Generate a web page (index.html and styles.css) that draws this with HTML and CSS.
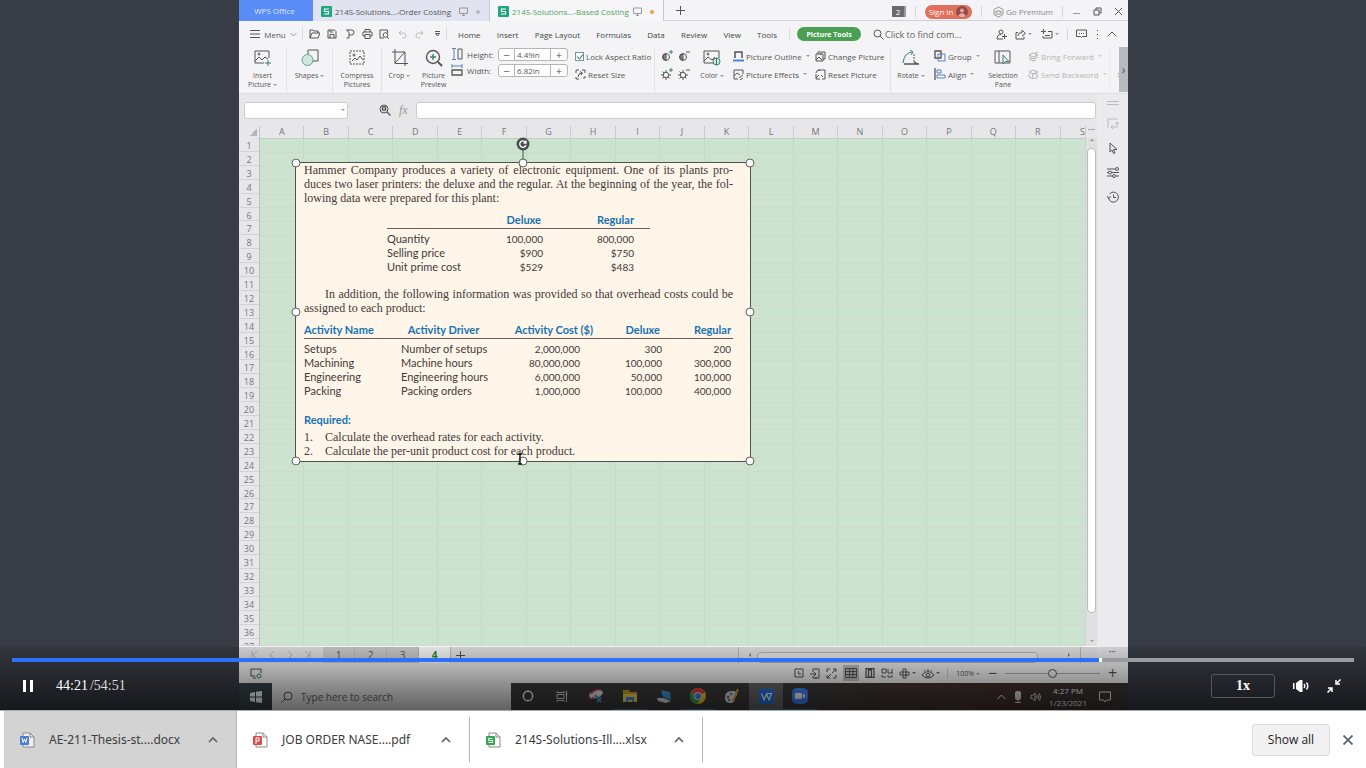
FILE: index.html
```html
<!DOCTYPE html>
<html lang="en">
<head>
    <meta charset="UTF-8">
    <meta name="viewport" content="width=device-width, initial-scale=1.0">
    <title>Lecture Recording</title>
    <link rel="stylesheet" href="styles.css">
</head>
<body>
    <main class="player">
        <div class="screen">

            <!-- Window tabs -->
            <header class="titlebar">
                <button class="home-tab">WPS Office</button>
                <button class="file-tab">
                    <svg class="sheet-logo" width="11" height="11" viewBox="0 0 11 11"><rect width="11" height="11" rx="1" fill="#1fa67a"/><path d="M8 3H3.500v2.500H7.500V8H3" fill="none" stroke="#fff" stroke-width="1.200"/></svg>
                    <span class="file-name">214S-Solutions...-Order Costing</span>
                    <svg class="ico pale" width="9" height="9" viewBox="0 0 9 9"><path d="M.5 1h8v5.500h-8zM4.500 6.500v2M3 8.500h3"/></svg>
                    <span class="dot"></span>
                </button>
                <button class="file-tab current">
                    <svg class="sheet-logo" width="11" height="11" viewBox="0 0 11 11"><rect width="11" height="11" rx="1" fill="#1fa67a"/><path d="M8 3H3.500v2.500H7.500V8H3" fill="none" stroke="#fff" stroke-width="1.200"/></svg>
                    <span class="file-name">214S-Solutions...-Based Costing</span>
                    <svg class="ico pale" width="9" height="9" viewBox="0 0 9 9"><path d="M.5 1h8v5.500h-8zM4.500 6.500v2M3 8.500h3"/></svg>
                    <span class="dot unsaved"></span>
                </button>
                <button class="new-tab" aria-label="New tab"><svg class="ico" width="9" height="9" viewBox="0 0 9 9"><path d="M4.500 0v9M0 4.500h9"/></svg></button>
                <div class="window-tools">
                    <span class="count">2</span>
                    <i class="sep"></i>
                    <button class="sign-in">Sign in <svg width="12" height="12" viewBox="0 0 12 12"><circle cx="6" cy="6" r="6" fill="#8f4a4a"/><circle cx="6" cy="4.500" r="2" fill="#e7a79d"/><path d="M2 10q4-6 8 0-4 3-8 0z" fill="#e7a79d"/></svg></button>
                    <i class="sep"></i>
                    <button class="premium"><svg class="ico pale" width="11" height="12" viewBox="0 0 11 12"><path d="M5.500 1L10 3.500v5L5.500 11 1 8.500v-5zM3 5l1.200 1L5.500 4l1.300 2L8 5v3H3z"/></svg>Go Premium</button>
                    <i class="sep"></i>
                    <button aria-label="Minimize"><svg class="ico pale" width="9" height="9" viewBox="0 0 9 9"><path d="M1 6.500h7"/></svg></button>
                    <button aria-label="Restore"><svg class="ico" width="9" height="9" viewBox="0 0 9 9"><path d="M1 3h5v5H1zM3 3V1h5v5H6"/></svg></button>
                    <button aria-label="Close"><svg class="ico" width="9" height="9" viewBox="0 0 9 9"><path d="M1 1l7 7M8 1L1 8"/></svg></button>
                </div>
            </header>

            <!-- Menu row -->
            <nav class="menubar">
                <button class="menu-button">
                    <svg class="ico" width="10" height="8" viewBox="0 0 10 8"><path d="M0 .5h10M0 4h10M0 7.500h10"/></svg>
                    Menu
                    <svg class="ico pale" width="7" height="5" viewBox="0 0 7 5"><path d="M.5 1l3 3 3-3"/></svg>
                </button>
                <div class="quick">
                    <button aria-label="Open"><svg class="ico" width="11" height="10" viewBox="0 0 11 10"><path d="M1 9V1h3l1 1h4v2M1 9l2-5h8L9 9z"/></svg></button>
                    <button aria-label="Save"><svg class="ico" width="10" height="10" viewBox="0 0 10 10"><path d="M1 1h6.500L9 2.500V9H1zM3 9V5.500h4V9M3 1v2h3"/></svg></button>
                    <button aria-label="Export as PDF"><svg class="ico" width="10" height="10" viewBox="0 0 10 10"><path d="M1 1h5.500a2.300 2.300 0 010 5H4v-3M4 6v3H1.500M3 1v2"/></svg></button>
                    <button aria-label="Print"><svg class="ico" width="11" height="10" viewBox="0 0 11 10"><path d="M3 3V.5h5V3M3 7H1V3h9v4H8M3 5.500h5v4H3z"/></svg></button>
                    <button aria-label="Print preview"><svg class="ico" width="11" height="10" viewBox="0 0 11 10"><path d="M5 9H1V1h7.500v3M8 8l2 2"/><circle cx="6.500" cy="6" r="2.300"/></svg></button>
                    <button aria-label="Undo"><svg class="ico faint" width="9" height="9" viewBox="0 0 9 9"><path d="M3 1L1 3l2 2M1 3h4.500a2.500 2.500 0 010 5H4"/></svg></button>
                    <button aria-label="Redo"><svg class="ico faint" width="9" height="9" viewBox="0 0 9 9"><path d="M6 1l2 2-2 2M8 3H3.500a2.500 2.500 0 000 5H5"/></svg></button>
                    <button aria-label="Customize"><svg class="ico" width="7" height="6" viewBox="0 0 7 6"><path d="M1 .5h5M1.500 2.500h4L3.500 5z"/></svg></button>
                </div>
                <div class="menus">
                    <button>Home</button>
                    <button>Insert</button>
                    <button>Page Layout</button>
                    <button>Formulas</button>
                    <button>Data</button>
                    <button>Review</button>
                    <button>View</button>
                    <button>Tools</button>
                </div>
                <div class="context"><button class="picture-tools">Picture Tools</button></div>
                <div class="find">
                    <svg class="ico" width="11" height="11" viewBox="0 0 11 11"><circle cx="4.500" cy="4.500" r="3.500"/><path d="M7 7l3.500 3.500"/></svg>
                    <input type="text" aria-label="Find command" placeholder="Click to find com...">
                </div>
                <div class="share">
                    <button aria-label="Collaborate"><svg class="ico" width="11" height="11" viewBox="0 0 11 11"><circle cx="5" cy="3" r="2"/><path d="M1 10q0-4.500 4-4.500M1 10h6M8.500 5v5M6 7.500h5"/></svg></button>
                    <button aria-label="Share"><svg class="ico" width="11" height="11" viewBox="0 0 11 11"><path d="M3 3.500H1V10h8V7.500M3 7q0-3.500 4-3.500V1l3.500 3.500L7 7"/></svg><b class="caret"></b></button>
                    <button aria-label="Note"><svg class="ico" width="12" height="11" viewBox="0 0 12 11"><path d="M0 2.500h5M2.500 0v5M7 2.500h4V9H2V7M4 6.500h5"/></svg><b class="caret"></b></button>
                    <i class="sep"></i>
                    <button aria-label="Feedback"><svg class="ico" width="11" height="10" viewBox="0 0 11 10"><path d="M.5 1h10v6.500H6.500l-1 1-1-1h-4zM3 4.500h1M5 4.500h1M7 4.500h1"/></svg></button>
                    <button aria-label="More"><svg class="ico" width="3" height="9" viewBox="0 0 3 9"><path d="M1 .5h1M1 4.500h1M1 8.500h1"/></svg></button>
                    <button aria-label="Collapse ribbon"><svg class="ico" width="10" height="6" viewBox="0 0 10 6"><path d="M.5 5.500L5 1l4.500 4.500"/></svg></button>
                </div>
            </nav>

            <!-- Ribbon -->
            <section class="ribbon">
                <button class="tool ruled">
                    <svg class="ico" width="18" height="18" viewBox="0 0 18 18"><path d="M10 14H1V2h14v7M1 12l4-4 3 3 3-3 3 2"/><circle cx="5" cy="5" r="1"/><path d="M14 11v6M11 14h6" stroke="#3d7d6a"/></svg>
                    <span>Insert<br>Picture<b class="caret"></b></span>
                </button>
                <button class="tool ruled">
                    <svg class="ico" width="18" height="18" viewBox="0 0 18 18"><path d="M7 1h10v11H7z"/><circle cx="6.500" cy="11" r="5.500" fill="#cfe8de" stroke="#6f9d8d"/></svg>
                    <span>Shapes<b class="caret"></b></span>
                </button>
                <button class="tool ruled">
                    <svg class="ico" width="18" height="18" viewBox="0 0 18 18"><path d="M2 2h14v13H2z" stroke-dasharray="2 1"/><path d="M4 12l3-3 2 2 3-4 3 4"/><circle cx="6" cy="6" r="1"/></svg>
                    <span>Compress<br>Pictures</span>
                </button>
                <button class="tool">
                    <svg class="ico" width="18" height="18" viewBox="0 0 18 18"><path d="M4 0v14.500h13M1 3h13v14M4 14L14 3" /></svg>
                    <span>Crop<b class="caret"></b></span>
                </button>
                <button class="tool">
                    <svg class="ico" width="18" height="18" viewBox="0 0 18 18"><circle cx="8" cy="8" r="6.500" stroke-width="1.400"/><path d="M13 13l4 4" stroke-width="2"/><path d="M8 5v6M5 8h6" stroke="#3d7d6a" stroke-width="1.400"/></svg>
                    <span>Picture<br>Preview</span>
                </button>
                <div class="rows size">
                    <div class="size-row">
                        <svg class="ico" width="12" height="12" viewBox="0 0 12 12"><path d="M7 1h4v10H7z"/><path d="M1 .5h4M1 11.500h4M3 1v10" stroke="#5b7fc4"/></svg>
                        <label for="pic-height">Height:</label>
                        <div class="stepper"><button aria-label="Less height">−</button><input id="pic-height" type="text" value="4.49in"><button aria-label="More height">+</button></div>
                    </div>
                    <div class="size-row">
                        <svg class="ico" width="12" height="12" viewBox="0 0 12 12"><path d="M1 6h10v5H1z" stroke-width="1.300"/><path d="M1 0v4M11 0v4M1 2h10" stroke="#5b7fc4"/></svg>
                        <label for="pic-width">Width:</label>
                        <div class="stepper"><button aria-label="Less width">−</button><input id="pic-width" type="text" value="6.82in"><button aria-label="More width">+</button></div>
                    </div>
                </div>
                <div class="rows ruled">
                    <label class="small"><input class="tick" type="checkbox" checked>Lock Aspect Ratio</label>
                    <button class="small"><svg class="ico" width="11" height="11" viewBox="0 0 11 11"><path d="M1 4V1h3M7 1h3v3M1 8v2h3M3 8q0-4 4-4M5 2.500L7.500 4 6 6M8 9h2V7"/></svg>Reset Size</button>
                </div>
                <div class="light">
                    <button aria-label="More contrast"><svg class="ico" width="12" height="12" viewBox="0 0 12 12"><circle cx="5" cy="7" r="3.500"/><path d="M5 4v6a3 3 0 010-6" fill="#888"/><path d="M10 0v4M8 2h4" stroke="#3d7d6a"/></svg></button>
                    <button aria-label="Less contrast"><svg class="ico" width="12" height="12" viewBox="0 0 12 12"><circle cx="5" cy="7" r="3.500"/><path d="M5 4v6a3 3 0 010-6" fill="#888"/><path d="M8 2h4"/></svg></button>
                    <button aria-label="More brightness"><svg class="ico" width="12" height="12" viewBox="0 0 12 12"><circle cx="5" cy="7" r="2.700"/><path d="M5 2v2M5 10v2M0 7h2M8 7h2M1.500 3.500L3 5M1.500 10.500L3 9M8.500 10.500L7 9"/><path d="M10 0v4M8 2h4" stroke="#3d7d6a"/></svg></button>
                    <button aria-label="Less brightness"><svg class="ico" width="12" height="12" viewBox="0 0 12 12"><circle cx="5" cy="7" r="2.700"/><path d="M5 2v2M5 10v2M0 7h2M8 7h2M1.500 3.500L3 5M1.500 10.500L3 9M8.500 10.500L7 9M8 2h4"/></svg></button>
                </div>
                <button class="tool">
                    <svg class="ico" width="18" height="18" viewBox="0 0 18 18"><path d="M10 14H1V2h15v7M1 12l4-4 4 3 3-3"/><circle cx="5" cy="5" r="1"/><circle cx="13.500" cy="12.500" r="3.500" fill="#d5e8df" stroke="#3d7d6a"/><path d="M13.500 9v7" stroke="#3d7d6a"/></svg>
                    <span>Color<b class="caret"></b></span>
                </button>
                <div class="rows">
                    <button class="small"><svg class="ico" width="11" height="11" viewBox="0 0 11 11"><path d="M2 7V1h7v6" stroke-width="1.500"/><path d="M0 9.500h11" stroke="#4a86d8" stroke-width="2"/></svg>Picture Outline<b class="caret"></b></button>
                    <button class="small"><svg class="ico" width="11" height="11" viewBox="0 0 11 11"><path d="M10 5V1H1v9h4M1 7l3-3 3 2M6 9l4-3M7 11l3-2"/></svg>Picture Effects<b class="caret"></b></button>
                </div>
                <div class="rows ruled">
                    <button class="small"><svg class="ico" width="11" height="11" viewBox="0 0 11 11"><path d="M3 3V1h7v7H8M1 3h7v7H1zM1 9l3-3 3 3M5 4l2-2"/></svg>Change Picture</button>
                    <button class="small"><svg class="ico" width="11" height="11" viewBox="0 0 11 11"><path d="M3 1h7v9H7M1 5v5h4M1 9l3-3M1 4q0-3 4-3M6 6l2 2"/></svg>Reset Picture</button>
                </div>
                <button class="tool">
                    <svg class="ico" width="18" height="18" viewBox="0 0 18 18"><path d="M1 14q1-10 9-11M8 1l3 2-2 3" stroke="#3d7d6a"/><path d="M12 5v8" stroke-dasharray="2 1"/><path d="M2 15h15M12 13l4 2" stroke-width="1.300"/></svg>
                    <span>Rotate<b class="caret"></b></span>
                </button>
                <div class="rows">
                    <button class="small"><svg class="ico" width="12" height="12" viewBox="0 0 12 12"><path d="M1 1h6v7H1z" stroke-width="1.300"/><path d="M4 4h7v7H4z" stroke="#5b7fc4"/></svg>Group<b class="caret"></b></button>
                    <button class="small"><svg class="ico" width="12" height="12" viewBox="0 0 12 12"><path d="M1 0v12" stroke-width="1.300"/><path d="M3 2h4v3H3zM3 7h8v3H3z" stroke="#5b7fc4"/></svg>Align<b class="caret"></b></button>
                </div>
                <button class="tool">
                    <svg class="ico" width="18" height="18" viewBox="0 0 18 18"><path d="M1 2h15v12H1zM5 2v12"/><path d="M9 6v9l2.500-2.500H15z" fill="#e6f2ec" stroke="#3d7d6a"/></svg>
                    <span>Selection<br>Pane</span>
                </button>
                <div class="rows ruled off">
                    <button class="small"><svg class="ico" width="11" height="11" viewBox="0 0 11 11"><path d="M1 4l4-2 5 2-5 2zM1 6l4 2 5-2M1 8l4 2 3-1M7 2l3-1"/></svg>Bring Forward<b class="caret"></b></button>
                    <button class="small"><svg class="ico" width="11" height="11" viewBox="0 0 11 11"><path d="M1 3l4-2 5 2-5 2zM1 5v3l4 2"/><circle cx="7" cy="7" r="2.500"/></svg>Send Backword<b class="caret"></b></button>
                </div>
                <span class="cut">:</span>
                <button class="ribbon-next" aria-label="Scroll ribbon">›</button>
            </section>

            <!-- Workbook -->
            <div class="work">
                <div class="book">
                    <div class="formula-bar">
                        <div class="name-box"><input type="text" aria-label="Name box"><b class="caret"></b></div>
                        <svg class="ico" width="12" height="12" viewBox="0 0 12 12"><circle cx="5" cy="5" r="4"/><path d="M3.500 3h3v3h-3zM8 8l3.500 3.500" stroke-width="1.300"/></svg>
                        <span class="fx">fx</span>
                        <input class="formula" type="text" aria-label="Formula">
                    </div>
                    <div class="sheet">
                        <div class="corner"></div>
                        <div class="col-heads" id="colHeads"></div>
                        <div class="split"></div>
                        <div class="row-heads" id="rowHeads"></div>
                        <div class="cells">
                            <div class="col-lines" id="colLines"></div>
                            <div class="row-lines" id="rowLines"></div>

                            <article class="picture">
                                <p class="problem"><span class="full">Hammer Company produces a variety of electronic equipment. One of its plants pro-</span> <span class="full">duces two laser printers: the deluxe and the regular. At the beginning of the year, the fol-</span> <span>lowing data were prepared for this plant:</span></p>
                                <table class="prices">
                                    <thead>
                                        <tr><th></th><th>Deluxe</th><th>Regular</th><th></th></tr>
                                    </thead>
                                    <tbody>
                                        <tr><td>Quantity</td><td class="num">100,000</td><td class="num">800,000</td><td></td></tr>
                                        <tr><td>Selling price</td><td class="num">$900</td><td class="num">$750</td><td></td></tr>
                                        <tr><td>Unit prime cost</td><td class="num">$529</td><td class="num">$483</td><td></td></tr>
                                    </tbody>
                                </table>
                                <p class="problem"><span class="full indent">In addition, the following information was provided so that overhead costs could be</span> <span>assigned to each product:</span></p>
                                <table class="activities">
                                    <thead>
                                        <tr><th>Activity Name</th><th>Activity Driver</th><th>Activity Cost ($)</th><th>Deluxe</th><th>Regular</th></tr>
                                    </thead>
                                    <tbody>
                                        <tr><td>Setups</td><td>Number of setups</td><td class="num">2,000,000</td><td class="num">300</td><td class="num">200</td></tr>
                                        <tr><td>Machining</td><td>Machine hours</td><td class="num">80,000,000</td><td class="num">100,000</td><td class="num">300,000</td></tr>
                                        <tr><td>Engineering</td><td>Engineering hours</td><td class="num">6,000,000</td><td class="num">50,000</td><td class="num">100,000</td></tr>
                                        <tr><td>Packing</td><td>Packing orders</td><td class="num">1,000,000</td><td class="num">100,000</td><td class="num">400,000</td></tr>
                                    </tbody>
                                </table>
                                <h2>Required:</h2>
                                <ol>
                                    <li>Calculate the overhead rates for each activity.</li>
                                    <li>Calculate the per-unit product cost for each product.</li>
                                </ol>

                                <svg class="rotate" width="14" height="22" viewBox="0 0 14 22"><path d="M7 12v10" stroke="#4a5550"/><circle cx="7" cy="7" r="6.500" fill="#46504c"/><path d="M9.500 5.200A3.200 3.200 0 1010 8M10 3.500V6H7.500" fill="none" stroke="#fff" stroke-width="1.300"/></svg>
                                <i class="handle top left"></i>
                                <i class="handle top center"></i>
                                <i class="handle top right"></i>
                                <i class="handle middle left"></i>
                                <i class="handle middle right"></i>
                                <i class="handle bottom left"></i>
                                <i class="handle bottom center"></i>
                                <i class="handle bottom right"></i>
                                <svg class="ibeam" width="6" height="12" viewBox="0 0 6 12"><path d="M1 1h4M3 1v10M1 11h4" stroke="#111" fill="none" stroke-width="1.400"/></svg>
                            </article>
                        </div>
                        <div class="vscroll"><b class="up"></b><span class="thumb"></span><b class="caret"></b></div>
                    </div>
                    <div class="sheet-tabs">
                        <div class="sheet-nav">
                            <button aria-label="First sheet"><svg class="ico" width="7" height="8" viewBox="0 0 7 8"><path d="M1 0v8M6 0L2 4l4 4"/></svg></button>
                            <button aria-label="Previous sheet"><svg class="ico" width="7" height="8" viewBox="0 0 7 8"><path d="M5 0L1 4l4 4"/></svg></button>
                            <button aria-label="Next sheet"><svg class="ico" width="7" height="8" viewBox="0 0 7 8"><path d="M2 0l4 4-4 4"/></svg></button>
                            <button aria-label="Last sheet"><svg class="ico" width="7" height="8" viewBox="0 0 7 8"><path d="M6 0v8M1 0l4 4-4 4"/></svg></button>
                        </div>
                        <button class="sheet-tab">1</button>
                        <button class="sheet-tab">2</button>
                        <button class="sheet-tab">3</button>
                        <button class="sheet-tab current">4</button>
                        <button class="add-sheet" aria-label="Add sheet"><svg class="ico" width="9" height="9" viewBox="0 0 9 9"><path d="M4.500 0v9M0 4.500h9"/></svg></button>
                        <div class="hscroll"><b class="back"></b><span class="thumb"></span><b class="forward"></b></div>
                    </div>
                </div>
                <aside class="side">
                    <svg class="ico faint" width="12" height="4" viewBox="0 0 12 4"><path d="M0 .5h12M0 3.500h12"/></svg>
                    <button aria-label="Panel"><svg class="ico faint" width="12" height="11" viewBox="0 0 12 11"><path d="M1 1v9M1 1h10M5 9h5V4M8 6l2-2 2 2M6 7L4 9l2 2"/></svg></button>
                    <button aria-label="Select"><svg class="ico" width="12" height="12" viewBox="0 0 12 12"><path d="M3 1v9l2-2 1.500 3.500 1.500-.5L6.500 7.500H10z"/></svg></button>
                    <button aria-label="Properties"><svg class="ico" width="12" height="11" viewBox="0 0 12 11"><path d="M0 2h8M0 5.500h2M4 5.500h8M0 9h6M8 9h4"/><circle cx="10" cy="2" r="1.500"/><circle cx="3" cy="5.500" r="1.500"/><circle cx="7" cy="9" r="1.500"/></svg></button>
                    <button aria-label="History"><svg class="ico" width="12" height="12" viewBox="0 0 12 12"><path d="M1.500 7a5 5 0 101-4M0 5l1.500 2L4 5.500M6.500 3.500v3H9"/></svg></button>
                    <button class="side-more" aria-label="More panels">•••</button>
                </aside>
            </div>

            <footer class="statusbar">
                <svg class="ico" width="12" height="11" viewBox="0 0 12 11"><path d="M5 8H1V1h10v4M3 10h3"/><circle cx="9" cy="8" r="2" stroke="#3d7d6a"/></svg>
                <div class="views">
                    <button aria-label="Macro"><svg class="ico" width="10" height="10" viewBox="0 0 10 10"><path d="M1 1h8v8H1zM4.500 3v3H7"/></svg></button>
                    <button aria-label="Export"><svg class="ico" width="10" height="11" viewBox="0 0 10 11"><path d="M3 4V1h6v9H3V8M0 6h5M4 4l2 2-2 2M5 10h2"/></svg></button>
                    <button aria-label="Full screen"><svg class="ico" width="11" height="11" viewBox="0 0 11 11"><path d="M1 4V1h3M7 1h3v3M1 7v3h3M7 10h3V7M6 5l4-4M1 10l4-4"/></svg></button>
                    <button class="current" aria-label="Normal view"><svg class="ico" width="12" height="10" viewBox="0 0 12 10"><path d="M.5.5h11v9H.5zM.5 3.500h11M.5 6.500h11M4.500 0v10M8 0v10"/></svg></button>
                    <button aria-label="Page layout"><svg class="ico" width="10" height="10" viewBox="0 0 10 10"><path d="M1 .5h8v9H1zM3.500 2h3v7h-3z" stroke-width="1.300"/></svg></button>
                    <button aria-label="Page break preview"><svg class="ico" width="12" height="10" viewBox="0 0 12 10"><path d="M1 1v4h4V1zM7 1v4h5M11 1v4M1 7v2h4M7 7v2h4V7"/></svg></button>
                    <button aria-label="Reading mode"><svg class="ico" width="11" height="11" viewBox="0 0 11 11"><path d="M4 1h3v9H4zM1 4h9v3H1z"/></svg><b class="caret"></b></button>
                    <button aria-label="Eye protection"><svg class="ico" width="12" height="11" viewBox="0 0 12 11"><path d="M0 7q6-7 12 0-6 6-12 0M6 1v2M2 2l1 1.500M10 2L9 3.500"/><circle cx="6" cy="7" r="1.800"/></svg><b class="caret"></b></button>
                </div>
                <div class="zoom">
                    <label for="zoom">100%<b class="caret"></b></label>
                    <button aria-label="Zoom out">−</button>
                    <input id="zoom" type="range" min="0" max="200" value="100">
                    <button aria-label="Zoom in">+</button>
                </div>
            </footer>

            <!-- Windows taskbar -->
            <div class="taskbar">
                <button class="start" aria-label="Start"><svg width="12" height="12" viewBox="0 0 12 12" fill="#fff"><path d="M0 2l5-1v4.500H0zM6 .8L12 0v5.500H6zM0 6.500h5V11l-5-1zM6 6.500h6V12l-6-.8z"/></svg></button>
                <div class="win-search">
                    <svg class="ico" width="12" height="12" viewBox="0 0 12 12"><circle cx="7" cy="5" r="4"/><path d="M4 8L.5 11.500"/></svg>
                    <input type="text" aria-label="Windows search" placeholder="Type here to search">
                </div>
                <div class="apps">
                    <button aria-label="Cortana"><svg width="12" height="12" viewBox="0 0 12 12"><circle cx="6" cy="6" r="4.700" fill="none" stroke="#fff" stroke-width="1.500"/></svg></button>
                    <button aria-label="Task view"><svg width="12" height="12" viewBox="0 0 12 12" fill="none" stroke="#ddd"><path d="M1 1v1.500h7V1M1 4.500h7v4H1zM1 12v-1.500h7V12M10.500 1v11M9.500 4h2"/></svg></button>
                    <button aria-label="Snipping tool"><svg width="16" height="15" viewBox="0 0 16 15"><ellipse cx="8" cy="5" rx="7" ry="4" fill="#e8e4e6" transform="rotate(-20 8 5)"/><path d="M1 9q2 2 5-1M3 5q4-5 10-4" stroke="#d0424c" stroke-width="1.500" fill="none"/><path d="M7 6l6 7M13 8l-4 5" stroke="#4d94d8" stroke-width="2"/></svg></button>
                    <button class="open" aria-label="File Explorer"><svg width="16" height="14" viewBox="0 0 16 14"><path d="M1 1h6l1 2h7v10H1z" fill="#d9a520"/><path d="M1 5h14v8H1z" fill="#ffd65c"/><path d="M4 8h8v5h-2v-2H6v2H4z" fill="#3b98e0"/></svg></button>
                    <button aria-label="Remote desktop"><svg width="16" height="15" viewBox="0 0 16 15"><path d="M5 1l9 2 1 8-8-3z" fill="#3d9be0"/><path d="M1 9l6 0 8 3-5 2-8-2z" fill="#d8e4ec"/></svg></button>
                    <button class="open" aria-label="Chrome"><svg width="16" height="16" viewBox="0 0 16 16"><circle cx="8" cy="8" r="8" fill="#f7c52d"/><path d="M8 8L1 4a8 8 0 0114 0z" fill="#e84435"/><path d="M8 8L1 4a8 8 0 006 12l4-6z" fill="#34a853"/><circle cx="8" cy="8" r="3.800" fill="#fff"/><circle cx="8" cy="8" r="3" fill="#4285f4"/></svg></button>
                    <button aria-label="Paint"><svg width="16" height="16" viewBox="0 0 16 16"><path d="M1 10q0-7 7-7 6 0 5 4-1 2-3 2 2 6-4 6-5 0-5-5z" fill="#dfe6ea"/><circle cx="4" cy="9" r="1.400" fill="#e84435"/><circle cx="7" cy="6" r="1.400" fill="#4285f4"/><circle cx="5" cy="12" r="1.300" fill="#34a853"/><path d="M9 13l5-12" stroke="#e79a3a" stroke-width="2"/></svg></button>
                    <button class="open front" aria-label="WPS Writer"><svg width="15" height="15" viewBox="0 0 15 15"><rect width="15" height="15" rx="1" fill="#2277e8"/><path d="M2.500 4.500L5 11l2.500-6L10 11l2.500-6.500H8" fill="none" stroke="#fff" stroke-width="1.200"/></svg></button>
                    <button class="open" aria-label="Zoom"><svg width="16" height="16" viewBox="0 0 16 16"><rect width="16" height="16" rx="5" fill="#3f87ff"/><rect x="3" y="5" width="7" height="6" rx="1" fill="#fff"/><path d="M10.500 7.500L13 5.500v5l-2.500-2z" fill="#fff"/></svg></button>
                </div>
                <div class="tray">
                    <svg width="9" height="6" viewBox="0 0 9 6" fill="none" stroke="#fff"><path d="M.5 5l4-4 4 4"/></svg>
                    <svg width="8" height="13" viewBox="0 0 8 13" fill="#ddd"><rect x="1" width="6" height="9" rx="2"/><path d="M3.500 9h1v2H7v1H1v-1h2.500z"/></svg>
                    <svg width="11" height="10" viewBox="0 0 11 10" fill="none" stroke="#ddd"><path d="M1 3.500h1.500L5 1v8L2.500 6.500H1zM6.500 3.500q1 1.500 0 3M8 2.500q1.500 2.500 0 5M9.500 1.500q2 3.500 0 7"/></svg>
                    <div class="clock">4:27 PM<br>1/23/2021</div>
                    <svg width="12" height="12" viewBox="0 0 12 12" fill="none" stroke="#eee"><path d="M.5 1h11v8h-4L6 11 4.500 9h-4z"/></svg>
                </div>
            </div>
        </div>

        <!-- Playback controls -->
        <div class="controls">
            <input class="seek" type="range" aria-label="Seek" min="0" max="3291" value="2661">
            <div class="control-row">
                <button class="pause" aria-label="Pause"><svg width="10" height="12" viewBox="0 0 10 12" fill="#fff"><path d="M0 0h3v12H0zM7 0h3v12H7z"/></svg></button>
                <div class="time"><span>44:21</span>/54:51</div>
                <button class="speed">1x</button>
                <button aria-label="Volume"><svg width="16" height="14" viewBox="0 0 16 14"><path d="M0 4h1.500v6H0zM3 4l4-3h2.500v12H7L3 10z" fill="#fff"/><path d="M11 5q1.500 2 0 4M13.500 3.500q2.500 3.500 0 7" fill="none" stroke="#fff" stroke-width="1.400"/></svg></button>
                <button aria-label="Exit full screen"><svg width="14" height="14" viewBox="0 0 14 14" fill="none" stroke="#fff" stroke-width="1.500"><path d="M13.500.5L9.500 4.500M9 1v4h4M.5 13.500l4-4M1 9h4v4"/></svg></button>
            </div>
        </div>
    </main>

    <!-- Browser downloads -->
    <footer class="downloads">
        <div class="download active">
            <svg width="15" height="16" viewBox="0 0 15 16"><path d="M3 1h7l4 4v10H3z" fill="#eee" stroke="#8a8a8a"/><path d="M10 1v4h4" fill="none" stroke="#8a8a8a"/><rect y="4" width="9" height="9" rx="1" fill="#4a7bd0"/><path d="M2 6l1.200 4.500L4.500 7l1.300 3.500L7 6" fill="none" stroke="#fff"/></svg>
            <a href="#">AE-211-Thesis-st....docx</a>
            <button aria-label="Download options"><svg width="10" height="6" viewBox="0 0 10 6" fill="none" stroke="#5f6368" stroke-width="1.700"><path d="M1 5l4-4 4 4"/></svg></button>
        </div>
        <div class="download">
            <svg width="15" height="16" viewBox="0 0 15 16"><path d="M3 1h7l4 4v10H3z" fill="#fff" stroke="#8a8a8a"/><path d="M10 1v4h4" fill="none" stroke="#8a8a8a"/><rect y="4" width="9" height="9" rx="1" fill="#e04a4a"/><path d="M3 12V6h3v3H3" fill="none" stroke="#fff"/></svg>
            <a href="#">JOB ORDER NASE....pdf</a>
            <button aria-label="Download options"><svg width="10" height="6" viewBox="0 0 10 6" fill="none" stroke="#5f6368" stroke-width="1.700"><path d="M1 5l4-4 4 4"/></svg></button>
        </div>
        <div class="download">
            <svg width="15" height="16" viewBox="0 0 15 16"><path d="M3 1h7l4 4v10H3z" fill="#fff" stroke="#8a8a8a"/><path d="M10 1v4h4" fill="none" stroke="#8a8a8a"/><rect y="4" width="9" height="9" rx="1" fill="#2fa84f"/><path d="M6.500 6.500h-4v2h4v2h-4" fill="none" stroke="#fff"/></svg>
            <a href="#">214S-Solutions-Ill....xlsx</a>
            <button aria-label="Download options"><svg width="10" height="6" viewBox="0 0 10 6" fill="none" stroke="#5f6368" stroke-width="1.700"><path d="M1 5l4-4 4 4"/></svg></button>
        </div>
        <button class="show-all">Show all</button>
        <button class="dismiss" aria-label="Close"><svg width="10" height="10" viewBox="0 0 10 10" stroke="#5f6368" stroke-width="1.800"><path d="M.5.5l9 9M9.500.5l-9 9"/></svg></button>
    </footer>

    <script src="script.js"></script>
</body>
</html>
```

FILE: styles.css
```css
* {
    box-sizing: border-box;
}
body {
    margin: 0;
    height: 100vh;
    display: flex;
    flex-direction: column;
    font-family: "Open Sans", "Noto Sans", sans-serif;
    color: #555;
}
button, input {
    font: inherit;
    color: inherit;
    border: 0;
    padding: 0;
    margin: 0;
    background: none;
    min-width: 0;
}
button {
    display: flex;
    align-items: center;
    justify-content: center;
    white-space: nowrap;
}
svg {
    flex: none;
    display: block;
}
.ico {
    fill: none;
    stroke: #555;
}
.ico.pale {
    stroke: #999;
}
.ico.faint {
    stroke: #bbb;
}
.sep {
    width: 1px;
    height: 11px;
    background: #d6d6da;
}
.caret {
    display: inline-block;
    flex: none;
    border: 2px solid transparent;
    border-top-color: #999;
    border-bottom: 0;
    margin-left: 2px;
    vertical-align: middle;
}

/* player */
.player {
    flex: 1;
    min-height: 0;
    position: relative;
    display: grid;
    grid-template-columns: 239fr 889fr 238fr;
    grid-template-rows: minmax(0, 1fr);
    background: #383c45;
}
.screen {
    grid-column: 2;
    display: flex;
    flex-direction: column;
    min-width: 0;
    background: #f4f4f6;
    font-size: 8px;
    line-height: 9px;
}

/* title bar */
.titlebar {
    display: grid;
    grid-template-columns: minmax(0, 74fr) minmax(0, 177fr) minmax(0, 174fr) minmax(0, 32fr) minmax(0, 432fr);
    height: 21px;
    background: #f3f3f8;
    border-bottom: 1px solid #cfd0dc;
}
.home-tab {
    padding-right: 3px;
    background: #5a8cf8;
    color: #dbe6ff;
}
.file-tab {
    justify-content: flex-start;
    gap: 3px;
    padding: 2px 9px 0 8px;
    background: #e1e4f0;
    border-right: 1px solid #c5c7d6;
}
.file-tab.current {
    background: #f6f6f9;
    color: #4fa35a;
    height: 21px;
}
.file-name {
    flex: 1;
    text-align: left;
}
.dot {
    flex: none;
    width: 4px;
    height: 4px;
    margin-left: 5px;
    border-radius: 2px;
    background: #b5b7c4;
}
.dot.unsaved {
    background: #e8a050;
}
.window-tools {
    display: flex;
    align-items: center;
    justify-content: flex-end;
    gap: 9px;
    padding: 2px 5px 0 0;
}
.window-tools button + button {
    margin-left: 3px;
}
.count {
    width: 14px;
    height: 11px;
    line-height: 11px;
    text-align: center;
    color: #fff;
    background: #6b6b6f;
    border-right: 2px solid #999;
}
.sign-in {
    width: 47px;
    height: 14px;
    gap: 3px;
    border-radius: 7px;
    background: #e2705c;
    color: #fff;
}
.premium {
    gap: 2px;
    margin-left: 2px;
    color: #888;
}

/* menu row */
.menubar {
    display: grid;
    grid-template-columns: minmax(0, 64fr) minmax(0, 144fr) minmax(0, 343fr) minmax(0, 79fr) minmax(0, 123fr) minmax(0, 136fr);
    height: 26px;
    align-items: center;
}
.menu-button {
    gap: 4px;
    padding-left: 6px;
    border-right: 1px solid #dcdce0;
    height: 14px;
}
.quick {
    display: grid;
    grid-template-columns: repeat(8, 1fr);
    height: 14px;
    padding: 0 0 0 3px;
    border-right: 1px solid #dcdce0;
}
.menus {
    display: flex;
    justify-content: space-between;
    padding: 0 12px 0 11px;
    height: 14px;
    border-right: 1px solid #dcdce0;
    color: #444;
}
.context {
    padding-left: 7px;
}
.picture-tools {
    width: 64px;
    height: 14px;
    border-radius: 7px;
    background: #4a9f53;
    color: #fff;
    font-size: 7px;
    font-weight: bold;
}
.find {
    display: flex;
    align-items: center;
    gap: 1px;
    padding-left: 4px;
}
.find input {
    flex: 1;
    font-size: 9px;
}
.find input::placeholder, .win-search input::placeholder {
    color: #666;
    opacity: 1;
}
.share {
    display: flex;
    align-items: center;
    justify-content: space-between;
    padding: 0 11px 0 4px;
}

/* ribbon */
.ribbon {
    display: grid;
    grid-template-columns:
        minmax(0, 48fr) minmax(0, 46fr) minmax(0, 49fr) minmax(0, 35fr) minmax(0, 33fr)
        minmax(0, 122fr) minmax(0, 83fr) minmax(0, 39fr) minmax(0, 36fr) minmax(0, 82fr)
        minmax(0, 79fr) minmax(0, 40fr) minmax(0, 50fr) minmax(0, 44fr) minmax(0, 85fr)
        minmax(0, 9fr) minmax(0, 9fr);
    height: 47px;
    font-size: 7px;
    border-bottom: 1px solid #dddde0;
}
.tool {
    flex-direction: column;
    justify-content: flex-start;
    gap: 4px;
    padding-top: 2px;
}
.ruled {
    border-right: 1px solid #e2e2e5;
}
.rows {
    display: flex;
    flex-direction: column;
    gap: 6px;
    padding: 3px 0 0 3px;
    font-size: 8px;
}
.rows.size {
    gap: 4px;
    padding: 1px 0 0 1px;
}
.small {
    display: flex;
    align-items: center;
    gap: 2px;
    height: 12px;
    white-space: nowrap;
}
.small, .size-row {
    justify-content: flex-start;
}
.size-row {
    display: flex;
    align-items: center;
    gap: 4px;
    height: 12px;
}
.size-row label {
    width: 27px;
}
.stepper {
    display: grid;
    grid-template-columns: 15px 1fr 16px;
    flex: 1;
    height: 13px;
    margin-right: 4px;
    border: 1px solid #b5b5ba;
    border-radius: 3px;
    background: #fff;
}
.stepper input {
    padding-left: 2px;
    border: 1px solid #b5b5ba;
    border-width: 0 1px;
}
.stepper button {
    font-size: 11px;
}
.tick {
    appearance: none;
    width: 9px;
    height: 9px;
    border: 1px solid #6d9c8c;
    background: #fff;
}
.tick:checked::after {
    content: "";
    display: block;
    width: 3px;
    height: 5px;
    margin: 0 2px;
    border: solid #3d7d6a;
    border-width: 0 1px 1px 0;
    transform: rotate(40deg);
}
.light {
    display: grid;
    grid-template-columns: 1fr 1fr;
    align-content: start;
    gap: 6px 0;
    padding: 3px 1px 0 3px;
}
.off {
    opacity: 0.4;
}
.cut {
    padding-top: 23px;
    text-align: right;
}
.ribbon-next {
    height: 45px;
    background: #b9b9c0;
    font-size: 12px;
}

/* workbook */
.work {
    flex: 1;
    min-height: 0;
    display: flex;
    background: #e7e6e9;
}
.book {
    flex: 1;
    min-width: 0;
    display: flex;
    flex-direction: column;
}
.formula-bar {
    display: flex;
    align-items: center;
    gap: 8px;
    height: 32px;
    padding: 0 1px 0 5px;
}
.name-box {
    display: flex;
    align-items: center;
    width: 104px;
    margin-right: 23px;
    padding-right: 2px;
}
.name-box input {
    flex: 1;
}
.name-box, .formula {
    height: 17px;
    border: 1px solid #cbcbd0;
    border-radius: 3px;
    background: #fff;
}
.formula {
    flex: 1;
}
.fx {
    font-family: "Liberation Serif", serif;
    font-style: italic;
    font-size: 12px;
    color: #999;
}
.sheet {
    flex: 1;
    min-height: 0;
    display: grid;
    grid-template-columns: 21px minmax(0, 1fr) 11px;
    grid-template-rows: 12px minmax(0, 1fr);
}
.corner {
    display: flex;
    border-right: 1px solid #c5c5c9;
    background: linear-gradient(135deg, transparent 50%, #b5b5b9 50%) 11px 3px / 7px 7px no-repeat;
}
.col-heads, .col-lines {
    display: grid;
    grid-template-columns: repeat(18, 7fr) 4fr;
}
.row-heads, .row-lines {
    display: grid;
    grid-template-rows: repeat(36, 13fr) 7fr;
    min-height: 0;
}
.col-heads span {
    font-size: 9px;
    line-height: 12px;
    text-align: center;
    color: #777;
    border-right: 1px solid #cdcdd1;
    overflow: hidden;
}
.col-heads span:last-child {
    text-align: right;
}
.row-heads span {
    font-size: 9px;
    line-height: 15px;
    min-height: 0;
    overflow: hidden;
    text-align: center;
    color: #777;
    border-bottom: 1px solid #d3d3d7;
}
.row-heads {
    border-right: 1px solid #b9c4bb;
}
.split {
    margin: 3px 2px 0;
    border-top: 1px solid #aaa;
}
.cells {
    position: relative;
    background: #cce3cf;
    border-top: 1px solid #bccfc0;
}
.col-lines, .row-lines {
    position: absolute;
    inset: 0;
}
.col-lines span {
    border-right: 1px solid #c4dac8;
}
.row-lines span {
    min-height: 0;
    border-bottom: 1px solid #cddbcc;
}
.vscroll {
    display: flex;
    flex-direction: column;
    align-items: center;
    gap: 6px;
    padding: 0 1px 4px;
    background: #e0e0e2;
}
.vscroll .caret {
    margin: 21px 0 0;
}
.up {
    margin: 1px 0;
    border: 2px solid transparent;
    border-bottom-color: #888;
    border-top: 0;
}
.thumb {
    border: 1px solid #b9b9bd;
    border-radius: 4px;
    background: #fff;
}
.vscroll .thumb {
    flex: 1;
    width: 9px;
}

/* pasted picture */
.picture {
    position: absolute;
    left: 35px;
    top: 23px;
    width: 456px;
    height: 300px;
    padding: 0 17px 0 8px;
    border: 1px solid #4c554f;
    background: #fff5e9;
    color: #43393a;
    font-family: Lato, sans-serif;
    font-size: 11px;
    line-height: 14px;
}
.problem, .picture ol {
    font-family: "Liberation Serif", serif;
    font-size: 12px;
}
.problem {
    margin: 0;
}
.problem span {
    display: block;
}
.problem .full {
    text-align: justify;
    text-align-last: justify;
    white-space: nowrap;
}
.problem .indent {
    padding-left: 21px;
}
.picture table {
    border-collapse: collapse;
    table-layout: fixed;
}
.picture th, .picture h2 {
    color: #1573b5;
    font-weight: bold;
}
.picture th {
    padding: 0 0 1px;
    border-bottom: 1px solid #6b5f5c;
    text-align: right;
    white-space: nowrap;
}
.picture td {
    padding: 0;
    height: 14px;
    white-space: nowrap;
}
.picture .num {
    font-size: 10px;
    text-align: right;
}
.picture tbody::before {
    content: "";
    display: block;
    height: 3px;
}
.picture td:first-child, .picture th:first-child {
    text-align: left;
}
.prices {
    width: 263px;
    margin: 8px 0 13px 83px;
}
.prices th:nth-child(1) {
    width: 80px;
}
.prices th:nth-child(2) {
    width: 76px;
    padding-right: 2px;
}
.prices th:nth-child(3) {
    width: 91px;
}
.activities {
    width: 100%;
    margin: 8px 0 15px;
}
.activities th:nth-child(1) {
    width: 97px;
}
.activities th:nth-child(2) {
    width: 85px;
    text-align: center;
}
.activities th:nth-child(3) {
    width: 107px;
}
.activities td:nth-child(3) {
    padding-right: 13px;
}
.activities th:nth-child(4) {
    width: 69px;
    padding-right: 2px;
}
.activities th:nth-child(5), .activities td:nth-child(5) {
    padding-right: 2px;
}
.picture h2 {
    margin: 0 0 3px;
    font-size: 11px;
    line-height: 14px;
}
.picture ol {
    margin: 0;
    padding-left: 21px;
}
.picture li::marker {
    content: counter(list-item) ".\00a0\00a0\00a0\00a0";
}
.handle {
    position: absolute;
    width: 9px;
    height: 9px;
    border: 1px solid #5b645f;
    border-radius: 50%;
    background: #fff;
    transform: translate(-50%, -50%);
}
.handle.top { top: 0; }
.handle.middle { top: 50%; }
.handle.bottom { top: 100%; }
.handle.left { left: 0; }
.handle.center { left: 50%; }
.handle.right { left: 100%; }
.rotate {
    position: absolute;
    left: 50%;
    bottom: 100%;
    margin: 0 0 4px -7px;
}
.ibeam {
    position: absolute;
    left: 50%;
    bottom: -4px;
    margin-left: -6px;
}

/* sheet tabs */
.sheet-tabs {
    display: flex;
    height: 17px;
    border-top: 1px solid #f5f5f5;
    font-size: 10px;
}
.sheet-nav {
    display: grid;
    grid-template-columns: repeat(4, 1fr);
    width: 84px;
    padding: 0 7px;
}
.sheet-nav .ico {
    stroke: #b5b5b5;
}
.sheet-tab {
    width: 32px;
    background: #cfcfd1;
    border-right: 1px solid #bdbdbf;
}
.sheet-tab.current {
    background: #fff;
    color: #2b8a3e;
    font-weight: bold;
}
.add-sheet {
    width: 18px;
}
.hscroll {
    display: flex;
    align-items: center;
    flex: 1;
    gap: 6px;
    margin: 0 16px 0 269px;
    padding-left: 10px;
    border: solid #bbb;
    border-width: 0 1px;
}
.hscroll .thumb {
    flex: 1;
    height: 11px;
    margin: 4px 24px 0 0;
    background: #f0f0f0;
}
.back, .forward {
    border: 2px solid transparent;
    border-right-color: #777;
    border-left: 0;
}
.forward {
    border-left: 2px solid #777;
    border-right: 0;
    margin-right: 10px;
}

/* side panel */
.side {
    display: flex;
    flex-direction: column;
    align-items: center;
    gap: 13px;
    width: 31px;
    padding-top: 7px;
    background: #ebeaed;
}
.side-more {
    margin-top: auto;
    margin-bottom: 6px;
    font-size: 6px;
}

/* status bar */
.statusbar {
    display: flex;
    align-items: center;
    height: 20px;
    padding: 0 11px;
    background: #f2f2f2;
}
.views {
    display: flex;
    align-items: center;
    gap: 6px;
    margin-left: auto;
}
.views .current {
    height: 16px;
    padding: 0 2px;
    background: #c0c0c0;
}
.views .caret {
    border-top-color: #666;
}
.zoom {
    display: flex;
    align-items: center;
    gap: 8px;
    margin-left: 7px;
    padding-left: 8px;
    border-left: 1px solid #ccc;
}
.zoom label {
    font-size: 7px;
}
.zoom button {
    font-size: 16px;
    width: 9px;
}
.zoom input {
    appearance: none;
    width: 95px;
    height: 10px;
    background: linear-gradient(#aaa, #aaa) center / 100% 1px no-repeat;
}
.zoom input::-webkit-slider-thumb {
    appearance: none;
    width: 9px;
    height: 9px;
    border: 1px solid #555;
    border-radius: 50%;
    background: #f2f2f2;
}

/* taskbar */
.taskbar {
    display: flex;
    height: 28px;
    background: linear-gradient(90deg, #37464b, #3c3c3c 30%, #3c3c3c 60%, #43322f 85%, #3a3636);
    color: #fff;
}
.start {
    width: 33px;
}
.win-search {
    display: flex;
    align-items: center;
    gap: 8px;
    width: 239px;
    padding-left: 9px;
    background: #f0f0f0;
}
.win-search input {
    flex: 1;
    font-size: 10px;
}
.apps {
    display: flex;
}
.apps button {
    width: 34px;
    border-bottom: 2px solid transparent;
}
.apps .open {
    border-bottom-color: #3f7fc8;
}
.apps .front {
    background: #6a6a6a;
}
.tray {
    display: flex;
    align-items: center;
    gap: 8px;
    margin-left: auto;
    padding-right: 17px;
}
.clock {
    margin-right: 4px;
    text-align: center;
    font-size: 8px;
    line-height: 12px;
}

/* playback controls */
.controls {
    position: absolute;
    left: 0;
    right: 0;
    bottom: 0;
    height: 64px;
    padding: 11px 12px 0;
    background: linear-gradient(rgba(0, 0, 0, 0.12), rgba(0, 0, 0, 0.6));
    border-bottom: 1px solid #aaa;
    color: #fff;
    font-family: "Liberation Serif", serif;
}
.seek {
    appearance: none;
    display: block;
    width: 100%;
    height: 4px;
    background: linear-gradient(90deg, #2f70fa 81%, #fff 81%, #fff 81.2%, #999b9f 81.2%);
}
.seek::-webkit-slider-thumb {
    appearance: none;
    width: 4px;
    height: 4px;
    opacity: 0;
}
.control-row {
    display: flex;
    align-items: center;
    gap: 18px;
    height: 47px;
    padding: 0 13px 0 11px;
}
.time {
    margin-left: 5px;
    margin-right: auto;
    font-size: 14px;
    color: #ddd;
}
.time span {
    margin-right: 2px;
    color: #fff;
}
.speed {
    width: 64px;
    height: 24px;
    border: 1px solid #55575b;
    border-radius: 3px;
    font-size: 14px;
    font-weight: bold;
}

/* downloads bar */
.downloads {
    display: flex;
    align-items: center;
    height: 57px;
    padding: 0 13px 0 4px;
    background: #fff;
    color: #3c3c40;
    font-size: 12px;
}
.download {
    display: flex;
    align-items: center;
    gap: 14px;
    width: 233px;
    height: 45px;
    padding: 0 18px 0 16px;
    border-right: 1px solid #b5b5b5;
}
.download.active {
    height: 57px;
    background: #d3d3d3;
}
.download a {
    flex: 1;
    color: inherit;
    font-family: "Noto Sans", sans-serif;
    text-decoration: none;
    white-space: nowrap;
}
.show-all {
    width: 78px;
    height: 32px;
    margin-left: auto;
    border: 1px solid #dadce0;
    border-radius: 3px;
    background: #f1f1f1;
    color: #222;
}
.dismiss {
    margin-left: 13px;
}
```

FILE: script.js
```js
const columns = 'ABCDEFGHIJKLMNOPQRS'.split('');
const rowCount = 37;

function fill(id, items) {
    const box = document.getElementById(id);
    items.forEach(text => {
        const span = document.createElement('span');
        span.textContent = text;
        box.appendChild(span);
    });
}

const rows = [];
for (let i = 1; i <= rowCount; i++) {
    rows.push(i);
}

fill('colHeads', columns);
fill('rowHeads', rows);
// empty cells of the grid, only their borders are drawn
fill('colLines', columns.map(() => ''));
fill('rowLines', rows.map(() => ''));
```
